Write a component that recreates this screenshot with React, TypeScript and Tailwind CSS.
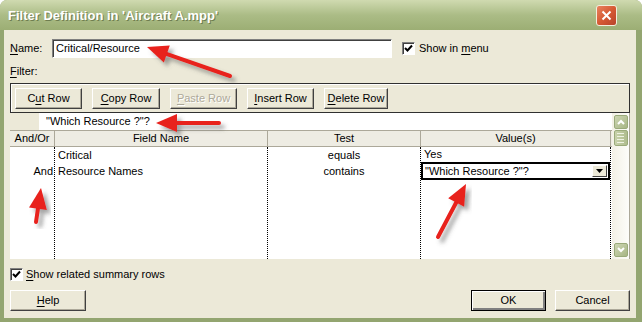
import type { ReactNode } from "react";

const arrows = [
  { from: [230, 76], to: [147, 47] },
  { from: [219, 123], to: [156, 123] },
  { from: [36, 222], to: [41, 188] },
  { from: [438, 237], to: [466, 184] },
];

function arrowHead(from: number[], to: number[], len = 21, half = 9) {
  const dx = to[0] - from[0];
  const dy = to[1] - from[1];
  const d = Math.hypot(dx, dy);
  const ux = dx / d;
  const uy = dy / d;
  const bx = to[0] - ux * len;
  const by = to[1] - uy * len;
  return {
    base: [bx + ux * 2, by + uy * 2],
    points: `${to[0]},${to[1]} ${bx - uy * half},${by + ux * half} ${bx + uy * half},${by - ux * half}`,
  };
}

function Arrows() {
  return (
    <svg className="pointer-events-none absolute inset-0" width="642" height="322" viewBox="0 0 642 322">
      <defs>
        <filter id="shadow" x="-20%" y="-20%" width="140%" height="140%">
          <feDropShadow dx="4" dy="4" stdDeviation="2" floodColor="#5a5a5a" floodOpacity="0.55" />
        </filter>
      </defs>
      {arrows.map((a, i) => {
        const h = arrowHead(a.from, a.to);
        return (
          <g key={i} filter="url(#shadow)">
            <line x1={a.from[0]} y1={a.from[1]} x2={h.base[0]} y2={h.base[1]} stroke="#E8201C" strokeWidth="4" strokeLinecap="round" />
            <polygon points={h.points} fill="#E8201C" />
          </g>
        );
      })}
    </svg>
  );
}

function U({ children }: { children: ReactNode }) {
  return <span className="underline underline-offset-[2px]">{children}</span>;
}

function Btn({ children, className = "", isDefault = false, disabled = false }: { children: ReactNode; className?: string; isDefault?: boolean; disabled?: boolean }) {
  return (
    <div
      className={
        "flex h-[21px] items-center justify-center bg-[#ECE9D8] " +
        (isDefault
          ? "border border-black shadow-[inset_1px_1px_0_#fff,inset_-2px_-2px_0_#808080] "
          : "border border-t-white border-l-white border-r-[#404040] border-b-[#404040] shadow-[inset_-1px_-1px_0_#ACA899] ") +
        (disabled ? "text-[#ACA899] [text-shadow:1px_1px_0_#fff] " : "") +
        className
      }
    >
      {children}
    </div>
  );
}

function Checkbox() {
  return (
    <div className="flex h-[13px] w-[13px] items-center justify-center border border-t-[#808080] border-l-[#808080] border-b-white border-r-white bg-white shadow-[inset_1px_1px_0_#404040]">
      <svg width="9" height="9" viewBox="0 0 9 9">
        <path d="M1 4l2.5 2.5L8 1.5" stroke="#000" strokeWidth="2" fill="none" />
      </svg>
    </div>
  );
}

function ScrollBtn({ up }: { up: boolean }) {
  return (
    <div className="flex h-[14px] w-[14px] items-center justify-center rounded-[2px] border border-[#9AAA7A] bg-gradient-to-br from-[#CDD6B2] to-[#A7B585]">
      <svg width="8" height="6" viewBox="0 0 8 6">
        <path d={up ? "M1 5l3-3 3 3" : "M1 1l3 3 3-3"} stroke="#fff" strokeWidth="2" fill="none" />
      </svg>
    </div>
  );
}

export default function App() {
  return (
    <div className="relative h-[322px] w-[642px] overflow-hidden bg-white font-['Liberation_Sans',Arial,sans-serif] text-[11px] leading-none text-black">
      <div className="flex h-full flex-col rounded-t-[7px] bg-[#93A570]">
        {/* Title bar */}
        <div className="flex h-[30px] shrink-0 items-center justify-between rounded-t-[7px] bg-gradient-to-b from-[#D0DAB0] via-[#ABBC86] to-[#9CAE74] pl-[8px] pr-[25px]">
          <span className="text-[13px] font-bold text-white [text-shadow:1px_1px_0_#6E7D50]">
            Filter Definition in 'Aircraft A.mpp'
          </span>
          <div className="flex h-[21px] w-[21px] items-center justify-center rounded-[3px] border border-[#F2EEDC] bg-gradient-to-br from-[#E8825E] via-[#D65A34] to-[#B8432A]">
            <svg width="11" height="11" viewBox="0 0 11 11">
              <path d="M1.5 1.5l8 8M9.5 1.5l-8 8" stroke="#fff" strokeWidth="2" />
            </svg>
          </div>
        </div>

        {/* Body */}
        <div className="mb-[4px] ml-[4px] mr-[6px] flex flex-1 flex-col bg-[#ECE9D8] px-[6px]">
          {/* Name row */}
          <div className="mt-[9px] flex h-[19px] items-center">
            <span className="w-[42px]">
              <U>N</U>ame:
            </span>
            <div className="flex h-[19px] w-[340px] items-center border border-t-[#808080] border-l-[#808080] border-b-white border-r-white bg-white pl-[3px] shadow-[inset_1px_1px_0_#404040]">
              Critical/Resource
            </div>
            <div className="ml-[10px] flex items-center gap-[4px]">
              <Checkbox />
              <span>
                Show in <U>m</U>enu
              </span>
            </div>
          </div>

          {/* Filter label */}
          <div className="mt-[7px] flex h-[13px] items-center">
            <span>
              <U>F</U>ilter:
            </span>
          </div>

          {/* Toolbar frame */}
          <div className="mt-[5px] flex h-[30px] w-[620px] items-start gap-[10px] border border-[#303030] pl-[4px] pt-[4px] shadow-[inset_1px_1px_0_#fff]">
            <Btn className="w-[67px]">
              C<U>u</U>t Row
            </Btn>
            <Btn className="w-[68px]">
              <U>C</U>opy Row
            </Btn>
            <Btn className="w-[67px]" disabled>
              <U>P</U>aste Row
            </Btn>
            <Btn className="w-[67px]">
              <U>I</U>nsert Row
            </Btn>
            <Btn className="w-[64px]">
              <U>D</U>elete Row
            </Btn>
          </div>

          {/* Grid */}
          <div className="flex h-[146px] w-[620px] border-r border-[#ACA899]">
            <div className="flex w-[602px] flex-col">
              {/* Entry bar */}
              <div className="flex h-[18px] border-b border-[#ACA899]">
                <div className="w-[29px] bg-[#ECE9D8]" />
                <div className="flex flex-1 items-center bg-white pl-[7px]">"Which Resource ?"?</div>
              </div>
              {/* Header */}
              <div className="flex h-[16px] border-b border-[#ACA899] bg-[#EEECE3]">
                <div className="flex w-[45px] items-center justify-center border-r border-[#ACA899]">And/Or</div>
                <div className="flex w-[213px] items-center justify-center border-r border-[#ACA899]">Field Name</div>
                <div className="flex w-[153px] items-center justify-center border-r border-[#ACA899]">Test</div>
                <div className="flex w-[190px] items-center justify-center border-r border-[#ACA899]">Value(s)</div>
              </div>
              {/* Data */}
              <div className="flex flex-1 bg-white">
                <div className="flex w-[45px] flex-col border-r border-dotted border-black">
                  <div className="h-[16px]" />
                  <div className="flex h-[16px] items-center justify-end pr-[1px]">And</div>
                </div>
                <div className="flex w-[213px] flex-col border-r border-dotted border-black pl-[3px]">
                  <div className="flex h-[16px] items-center">Critical</div>
                  <div className="flex h-[16px] items-center">Resource Names</div>
                </div>
                <div className="flex w-[153px] flex-col border-r border-dotted border-black">
                  <div className="flex h-[16px] items-center justify-center">equals</div>
                  <div className="flex h-[16px] items-center justify-center">contains</div>
                </div>
                <div className="flex w-[190px] flex-col border-r border-dotted border-black">
                  <div className="flex h-[15px] items-center pl-[3px]">Yes</div>
                  <div className="flex h-[18px] items-center justify-between border-2 border-black bg-white pl-[2px] pr-[1px]">
                    <span>"Which Resource ?"?</span>
                    <div className="flex h-[12px] w-[15px] items-center justify-center border border-t-white border-l-white border-r-[#404040] border-b-[#404040] bg-[#ECE9D8]">
                      <svg width="7" height="4" viewBox="0 0 7 4">
                        <path d="M0 0h7L3.5 4z" fill="#000" />
                      </svg>
                    </div>
                  </div>
                </div>
              </div>
            </div>
            {/* Scrollbar */}
            <div className="flex w-[17px] flex-col items-center justify-between bg-gradient-to-r from-[#F3F1E6] to-[#FDFDFA] py-[2px]">
              <div className="flex flex-col gap-[1px]">
                <ScrollBtn up />
                <div className="flex h-[16px] w-[14px] flex-col items-center justify-center gap-[2px] rounded-[2px] border border-[#9AAA7A] bg-gradient-to-r from-[#C8D2AB] to-[#AFBC8E]">
                  <div className="h-px w-[7px] bg-[#EEF2E2]" />
                  <div className="h-px w-[7px] bg-[#EEF2E2]" />
                  <div className="h-px w-[7px] bg-[#EEF2E2]" />
                  <div className="h-px w-[7px] bg-[#EEF2E2]" />
                </div>
              </div>
              <ScrollBtn up={false} />
            </div>
          </div>

          {/* Summary rows checkbox */}
          <div className="mt-[8px] flex h-[14px] items-center gap-[3px]">
            <Checkbox />
            <span>
              <U>S</U>how related summary rows
            </span>
          </div>

          {/* Bottom buttons */}
          <div className="mt-[9px] flex items-center">
            <Btn className="w-[76px]">
              <U>H</U>elp
            </Btn>
            <div className="flex-1" />
            <Btn className="w-[75px]" isDefault>
              OK
            </Btn>
            <Btn className="ml-[9px] w-[75px]">Cancel</Btn>
          </div>
        </div>
      </div>
      <Arrows />
    </div>
  );
}
